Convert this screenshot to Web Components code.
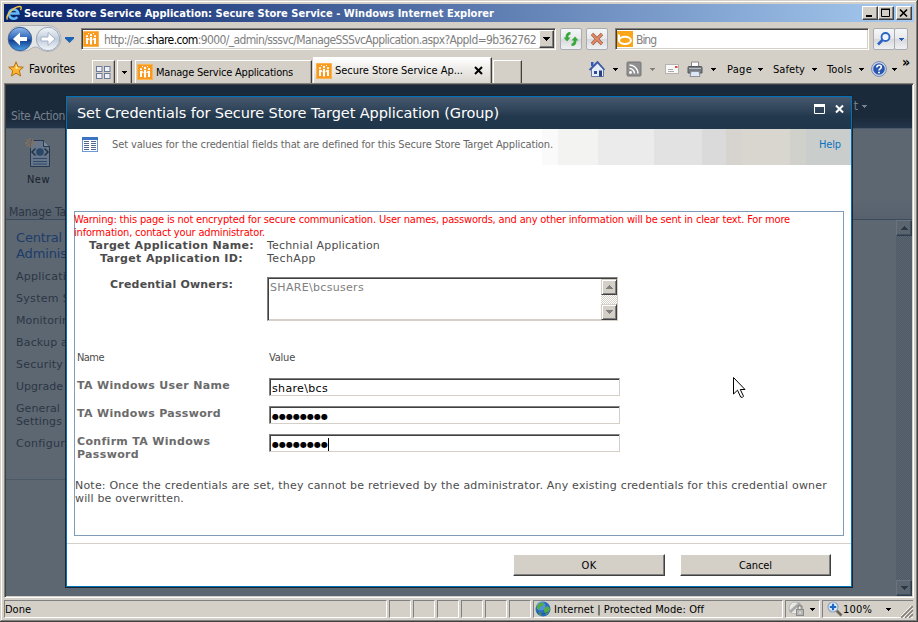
<!DOCTYPE html>
<html lang="en"><head><meta charset="utf-8"><title>Secure Store Service</title>
<style>
html,body{margin:0;height:100%;overflow:hidden;background:#d4d0c8}
body{--v:"DejaVu Sans",Verdana,sans-serif;--t:"DejaVu Sans Condensed","DejaVu Sans",Tahoma,sans-serif;font:11px/13px var(--t);color:#000}
</style></head><body>
<ie-window></ie-window>
<script>
const define=(name,css,html,setup)=>customElements.define(name,class extends HTMLElement{
  constructor(){super();this.attachShadow({mode:'open'});}
  connectedCallback(){
    if(this.ready)return;this.ready=true;
    this.shadowRoot.innerHTML=`<style>*{box-sizing:border-box}:host{display:block;box-sizing:border-box}svg{display:block;flex:none}${css}</style>${typeof html==='function'?html(this):html}`;
    if(setup)setup(this);
  }
});
const people=`<rect width="16" height="16" rx="1.5" fill="#f99a1f"/><rect x=".5" y=".5" width="15" height="15" rx="1" fill="none" stroke="#fbb450"/><g fill="#fff"><circle cx="4" cy="5.200" r="1.100"/><circle cx="12" cy="5.200" r="1.100"/><circle cx="8" cy="4" r="1.200"/><path d="M3 7h2v6H3zM11 7h2v6h-2zM7 6h2v7.500H7zM5 7l1.500 1v1.500L5 8.500zM11 7L9.500 8v1.500l1.500-1z"/><path d="M5 2h1v1H5zM10 2h1v1h-1z"/></g>`;
const icons={
 ie:[16,16,`<g fill="none" stroke="#63b8f5" stroke-width="2.600"><path d="M4 8.500H12.300A4.700 4.700 0 1 0 11.300 12"/></g><path d="M1.500 14.500C-1 11 7 2.500 13 1.500c3-.5 2.500 2 1.500 3.500" fill="none" stroke="#f6c246" stroke-width="1.400"/>`],
 people:[16,16,people],
 refresh:[16,16,`<path d="M7.500 1v2.500q-2.200 0-2.200 3H7.500L4 10.500.5 6.500h2Q2.500 1 7.500 1z" fill="#35a93c"/><path d="M8.500 15v-2.500q2.200 0 2.200-3H8.500L12 5.500l3.500 4h-2Q13.500 15 8.500 15z" fill="#35a93c"/>`],
 stop:[16,16,`<path d="M3 3l10 10M13 3L3 13" stroke="#9c5a45" stroke-width="3.200"/><path d="M3 3l10 10M13 3L3 13" stroke="#e58a66" stroke-width="1.800"/>`],
 bing:[16,16,`<rect width="16" height="16" fill="#faa61a"/><path d="M1 3l2 1v6H1z" fill="#fff"/><ellipse cx="8" cy="9.300" rx="5.900" ry="3.600" fill="none" stroke="#fff" stroke-width="2"/>`],
 search:[16,16,`<circle cx="9.500" cy="6" r="4" fill="#eaf3ff" stroke="#2a62c6" stroke-width="1.800"/><path d="M6.500 9L2 13.500" stroke="#2a62c6" stroke-width="2.600"/>`],
 star:[16,16,`<path d="M8 .8l2 5 5.300.4-4 3.500 1.300 5.300L8 12.200 3.500 15l1.200-5.300L.7 6.200 6 5.800z" fill="#fdb62c" stroke="#b87018"/><path d="M8 3l1.200 3.500 3.300.4-5 1z" fill="#fff0ad"/>`],
 quick:[16,16,`<g fill="#eef0f6" stroke="#6c7a9a"><rect x="1.500" y="2.500" width="5.500" height="5"/><rect x="9.500" y="2.500" width="5.500" height="5"/><rect x="1.500" y="9.500" width="5.500" height="5"/><rect x="9.500" y="9.500" width="5.500" height="5"/></g>`],
 home:[16,16,`<path d="M2.500 8v7.500h12V8L8.500 2z" fill="#e6edf8" stroke="#6678a8"/><path d="M.5 9L8.500 1l7 8" fill="none" stroke="#3d5aa8" stroke-width="1.800"/><path d="M2 1h2.500v4H2z" fill="#3358c0"/><path d="M5 10h3v3H5z" fill="#2d4e9e"/><path d="M10 9.500h3v6h-3z" fill="#26437f"/>`],
 feed:[16,16,`<rect x="1" y="1" width="14" height="14" rx="1" fill="#8f8f8f" stroke="#777"/><circle cx="4.500" cy="11.500" r="1.400" fill="#fff"/><path d="M3.500 7.500a5 5 0 0 1 5 5M3.500 4a8.500 8.500 0 0 1 8.500 8.500" fill="none" stroke="#fff" stroke-width="1.500"/>`],
 mail:[16,16,`<rect x="1.500" y="3.500" width="13" height="9" fill="#f8f8f6" stroke="#b6b2ad"/><path d="M11 5h2.500v2H11z" fill="#d44f45"/><path d="M4 8.500h5M4 10.500h6" stroke="#aaa"/>`],
 print:[16,16,`<path d="M4.500 1h7v6h-7z" fill="#fff" stroke="#888"/><path d="M1 6.500q0-1 1-1h12q1 0 1 1V12H1z" fill="#777b83" stroke="#55585f"/><path d="M2 7.500h12" stroke="#b9bcc3"/><path d="M4 10.500h8l1 5H3z" fill="#dce7f7" stroke="#8b8f96"/>`],
 help:[16,16,`<circle cx="8" cy="8" r="7.400" fill="#cfdaf0" stroke="#7787ac"/><circle cx="8" cy="8" r="5.800" fill="#2a55ae"/><path d="M5.800 6.500q0-2.300 2.300-2.300t2.200 1.900q0 1.200-1.300 1.800-1 .5-1 1.500" fill="none" stroke="#fff" stroke-width="1.600"/><circle cx="8" cy="11.500" r="1" fill="#fff"/>`],
 list:[16,16,`<rect x=".5" y=".5" width="15" height="14" fill="#fff" stroke="#6d9ad4"/><path d="M0 0h16v3H0z" fill="#3c74c4"/><path d="M2 4.500h5M2 6.500h5M2 8.500h5M2 10.500h5M2 12.500h5M9 4.500h5M9 6.500h5M9 8.500h5M9 10.500h5M9 12.500h5" stroke="#56698a"/>`],
 newpage:[26,31,`<path d="M5.500 2.500h13l6 6v20h-19z" fill="#677688" stroke="#26384f"/><path d="M18.500 2.500v6h6" fill="#7b8998" stroke="#26384f"/><circle cx="15" cy="14" r="3.800" fill="#294769"/><path d="M10.500 10.500L7 14l3.500 3.500M19.500 10.500L23 14l-3.500 3.500" fill="none" stroke="#20334a" stroke-width="1.500"/><path d="M8 20.500h14M8 23.500h14M8 26h14" stroke="#2d466a"/><path d="M5 0v10M0 5h10M1.500 1.500l7 7M8.500 1.500l-7 7" stroke="#85705a" stroke-width="1.400"/><circle cx="5" cy="5" r="1.800" fill="#5f6872"/>`],
 globe:[16,16,`<circle cx="8" cy="8" r="7.500" fill="#2c6bc0"/><circle cx="6" cy="5" r="4.500" fill="#6eaee8" opacity=".6"/><path d="M3 3q3-2 6-1l-1 3-3 1-1 3-2-1q-1-3 1-5zM9 7l4-2 2 3-2 4-2 2-2-4zM4 11l3 1-1 3q-2-1-3-3z" fill="#55ab45"/><path d="M2 11q5 4 11 0" fill="none" stroke="#143f82" opacity=".6"/>`],
 lock:[18,16,`<circle cx="7" cy="7" r="6" fill="#e8e8e6" stroke="#b5b5b3"/><path d="M2 11L12 2" stroke="#aaa" stroke-width="3"/><rect x="8.500" y="8.500" width="7" height="6" fill="#b7b7b5" stroke="#8a8a88"/><path d="M10 8V6.500q0-2 2-2t2 2V8" fill="none" stroke="#8a8a88" stroke-width="1.300"/><path d="M12 10.500v2" stroke="#fff"/>`],
 zoom:[16,16,`<path d="M9 9l5.500 5.500" stroke="#6d6458" stroke-width="2.600"/><circle cx="6" cy="6" r="5" fill="#dcebfb" stroke="#93a4bb" stroke-width="1.200"/><path d="M6 2.800v6.400M2.800 6h6.400" stroke="#1f67c4" stroke-width="2.200"/>`],
 cursor:[13,22,`<path d="M.5.5v16.500l4-3.800 3.200 6.900q2 1 2.800-.9l-3.200-6.700h4.700z" fill="#fff" stroke="#000"/>`],
 nav:[58,30,`<defs><linearGradient id="b" x2="0" y2="1"><stop stop-color="#8fb7ea"/><stop offset=".5" stop-color="#2a62b8"/><stop offset=".55" stop-color="#123f90"/><stop offset="1" stop-color="#4ba2e6"/></linearGradient><linearGradient id="f" x2="0" y2="1"><stop stop-color="#f5f8fb"/><stop offset=".5" stop-color="#c0ccdb"/><stop offset="1" stop-color="#f4f7fa"/></linearGradient></defs><path d="M15 1.500h27a13 13 0 0 1 0 26q-6 0-10-4-2-1-5 0-4 4-12 4a13 13 0 0 1 0-26z" fill="#e4e5e5" stroke="#aeb2b8"/><circle cx="14" cy="15" r="11.700" fill="url(#b)" stroke="#3c5f96"/><circle cx="42" cy="15" r="11.700" fill="url(#f)" stroke="#9aa8b9"/><path d="M7 15l7-6.500v4.500h7v4h-7v4.500z" fill="#fff"/><path d="M49 15l-7-6.500v4.500h-7v4h7v4.500z" fill="#fff" stroke="#a4b2c5"/>`],
 grip:[12,12,`<path d="M0 12L12 0M4 12l8-8M8 12l4-4" stroke="#858178" stroke-width="1.600"/><path d="M-1 11L11-1M3 11l9-9M7 11l5-5" stroke="#fff" stroke-width=".8"/>`]
};
define('ui-icon',':host{flex:none}',el=>{const [w,h,b]=icons[el.getAttribute('name')];
  return `<svg width="${w}" height="${h}" viewBox="0 0 ${w} ${h}">${b}</svg>`;});
define('drop-arrow',`:host{flex:none}:host([up]){transform:scaleY(-1)}`,el=>el.hasAttribute('big')?
 `<svg width="9" height="6"><path d="M0 0h9v1.500L4.500 6 0 1.500z" fill="currentColor"/></svg>`:el.hasAttribute('mid')?
 `<svg width="7" height="4" shape-rendering="crispEdges"><path d="M0 0h7v1H6v1H5v1H4v1H3V3H2V2H1V1H0z" fill="currentColor"/></svg>`:
 `<svg width="5" height="3" shape-rendering="crispEdges"><path d="M0 0h5v1H4v1H3v1H2V2H1V1H0z" fill="currentColor"/></svg>`);
define('win-button',`:host{width:16px;height:14px;background:#d4d0c8;border:1px solid;border-color:#fff #404040 #404040 #fff;box-shadow:inset -1px -1px #808080;flex:none}`,
 el=>`<svg width="13" height="12" viewBox="0 0 13 12">${{min:'<path d="M3 8h6v2H3z"/>',max:'<path d="M2.500 2.500h8v7h-8z" fill="none" stroke="#000"/><path d="M2 1.500h9v1.500H2z"/>',close:'<path d="M3 2.500l7 7M10 2.500l-7 7" stroke="#000" stroke-width="1.700"/>'}[el.getAttribute('kind')]}</svg>`);
define('title-bar',`:host{display:flex;height:18px;align-items:center;background:linear-gradient(90deg,#0a246a,#a6caf0);padding:0 2px;color:#fff;font-weight:bold}ui-icon{margin-right:2px}.g{flex:1}win-button:last-child{margin-left:2px}`,
 `<ui-icon name="ie"></ui-icon><fit-text w="470">Secure Store Service Application: Secure Store Service - Windows Internet Explorer</fit-text><span class="g"></span><win-button kind="min"></win-button><win-button kind="max"></win-button><win-button kind="close"></win-button>`);
define('sunken-box',`:host{background:#fff;border:1px solid;border-color:#808080 #fff #fff #808080;box-shadow:inset 1px 1px #404040,inset -1px -1px #d4d0c8;display:flex;align-items:center}`,`<slot></slot>`);
define('soft-button',`:host{display:flex;align-items:center;justify-content:center;height:22px;width:22px;border:1px solid #a9adb3;border-radius:2px;background:linear-gradient(#f5f6f7,#e8e9eb 48%,#d8d9dc 52%,#eef0f2);flex:none}`,`<slot></slot>`);
define('address-row',`:host{display:flex;height:32px;padding:6px 6px 0 2px;align-items:flex-start;font-size:12px}
 .nav{margin-top:-4px}.d{color:#1c63b4;margin:9px 7px 0 1px}.addr{width:475px;height:22px;padding:0 1px 0 1px}.addr fit-text{margin:2px 0 0 5px;color:#808080}b{font-weight:normal;color:#000}.dd{width:15px;height:18px;background:#d4d0c8;border:1px solid;border-color:#fff #404040 #404040 #fff;box-shadow:inset -1px -1px #808080;margin-left:auto;display:flex;align-items:center;justify-content:center}
 .r{margin-left:4px}.s{margin-left:4px}.bing{width:254px;height:22px;margin-left:7px;padding-left:1px;color:#808080}.bing fit-text{margin:2px 0 0 3px}.q{margin-left:4px}.q2{width:14px;margin-left:-1px;color:#245cb8}`,
 `<ui-icon class="nav" name="nav"></ui-icon><drop-arrow big class="d"></drop-arrow><sunken-box class="addr"><ui-icon name="people"></ui-icon><fit-text w="432">http://ac.<b>share.com</b>:9000/_admin/sssvc/ManageSSSvcApplication.aspx?AppId=9b362762</fit-text><span class="dd"><drop-arrow mid></drop-arrow></span></sunken-box><soft-button class="r"><ui-icon name="refresh"></ui-icon></soft-button><soft-button class="s"><ui-icon name="stop"></ui-icon></soft-button><sunken-box class="bing"><ui-icon name="bing"></ui-icon><fit-text w="20">Bing</fit-text></sunken-box><soft-button class="q"><ui-icon name="search"></ui-icon></soft-button><soft-button class="q2"><drop-arrow></drop-arrow></soft-button>`);
define('tab-item',`:host{display:flex;height:23px;align-items:center;border-top:1px solid #fff;border-left:1px solid #fff;border-right:1px solid #404040;box-shadow:inset -1px 0 #aaa69e;gap:3px;padding:0 3px 0 1px;align-self:flex-end;flex:none}:host([active]){height:26px;background:linear-gradient(#fff,#eceae6 50%,#dad7d0)}`,`<slot></slot>`);
define('command-bar',`:host{display:flex;height:29px;align-items:center;padding-left:4px}
 .f{margin:2px 0 0 5px}.qt{margin-left:17px;width:23px;padding-left:2px}.qd{margin-left:2px;width:15px;padding:0 0 0 4px}.a{margin-left:3px;width:177px}.b{margin-left:1px;width:179px;padding-left:2px}.c{margin-left:1px;width:29px}svg{margin-left:auto;margin-right:5px}
 .tools{display:grid;grid-template-columns:24px 13px 24px 14px 23px 24px 16px 31px 15px 39px 15px 32px 12px 21px 10px 10px;align-items:center;margin-left:67px;height:100%;white-space:nowrap}.tools fit-text{margin-top:2px}.tools drop-arrow{margin-top:1px}.more{font-size:14px;font-weight:bold;margin-top:-12px}`,
 `<ui-icon name="star"></ui-icon><fit-text class="f" style="font-size:11.500px" w="46">Favorites</fit-text><tab-item class="qt"><ui-icon name="quick"></ui-icon></tab-item><tab-item class="qd"><drop-arrow></drop-arrow></tab-item><tab-item class="a"><ui-icon name="people"></ui-icon><fit-text w="137">Manage Service Applications</fit-text></tab-item><tab-item class="b" active><ui-icon name="people"></ui-icon><fit-text w="128">Secure Store Service Ap...</fit-text><svg width="9" height="9"><path d="M1 1l7 7M8 1L1 8" stroke="#000" stroke-width="2"/></svg></tab-item><tab-item class="c"></tab-item>
 <div class="tools"><ui-icon name="home"></ui-icon><drop-arrow></drop-arrow><ui-icon name="feed"></ui-icon><drop-arrow style="color:#808080"></drop-arrow><ui-icon name="mail"></ui-icon><ui-icon name="print"></ui-icon><drop-arrow></drop-arrow><fit-text w="25">Page</fit-text><drop-arrow></drop-arrow><fit-text w="32">Safety</fit-text><drop-arrow></drop-arrow><fit-text w="25">Tools</fit-text><drop-arrow></drop-arrow><ui-icon name="help"></ui-icon><drop-arrow></drop-arrow><span class="more">»</span></div>`);
define('site-page',`:host{position:relative;height:511px;background:#5d6772;overflow:hidden;font-family:var(--v);color:#2b3644}
 header{height:44px;background:linear-gradient(#1b2a3b 75%,#23354a);color:#76818c;display:flex;justify-content:space-between;padding:25px 43px 0 5px;font-family:var(--t);font-size:12px;border-bottom:1px solid #49596a}header .t{margin:-10px 2px 0 0;display:flex;height:13px;align-items:center;gap:4px}
 .ribbon{height:91px;padding:9px 0 0 18px;border-bottom:1px solid #3b4b5c;background:linear-gradient(#5d6772 78%,#56616d)}.n{margin:4px 0 0 3px;color:#17202b;font-family:var(--t)}.m{margin:20px 0 0 -15px;font-family:var(--t);font-size:12px}
 .row{display:flex;height:376px}nav{width:60px;height:260px;border-bottom:1px solid #4b5866;padding:10px 0 0 10px}nav h2{margin:0 0 8px;font:13px/16px var(--v);color:#1c3c69}nav fit-text{margin-bottom:9px}nav h2 fit-text{margin:0}nav .tight{margin-bottom:0}
 .scroll{margin-left:auto;width:16px;height:376px;background:conic-gradient(#4d5966 25%,#5a6570 0 50%,#4d5966 0 75%,#5a6570 0) 0 0/2px 2px;display:flex;flex-direction:column;justify-content:space-between}.scroll span{height:16px;display:flex;align-items:center;justify-content:center;background:#5a6570;border:1px solid;border-color:#6a747f #2e3c4b #2e3c4b #6a747f;box-shadow:inset -1px -1px #414e5c;color:#2b3744}`,
 `<header><fit-text w="54">Site Action</fit-text><span class="t">t <drop-arrow></drop-arrow></span></header><div class="ribbon"><ui-icon name="newpage" style="margin-left:1px"></ui-icon><fit-text class="n" w="23">New</fit-text><fit-text class="m" w="57">Manage Ta</fit-text></div><div class="row"><nav><h2><fit-text w="46">Central</fit-text><fit-text w="51">Adminis</fit-text></h2><fit-text w="50">Applicati</fit-text><fit-text w="54">System S</fit-text><fit-text w="53">Monitorin</fit-text><fit-text w="52">Backup a</fit-text><fit-text w="47">Security</fit-text><fit-text w="47">Upgrade</fit-text><fit-text class="tight" w="44">General</fit-text><fit-text w="46">Settings</fit-text><fit-text w="49">Configur</fit-text></nav><div class="scroll"><span><drop-arrow mid up></drop-arrow></span><span><drop-arrow mid></drop-arrow></span></div></div>`);
define('push-button',`:host{width:152px;height:22px;background:#d4d0c8;border:1px solid;border-color:#fff #404040 #404040 #fff;box-shadow:inset -1px -1px #808080;display:flex;align-items:center;justify-content:center;font-family:var(--t)}`,`<slot></slot>`);
define('field-row',`:host{display:flex;height:28px;padding-left:2px;color:#6b6b6b}.l{width:192px;font-weight:bold;padding-top:1px}sunken-box{width:351px;height:18px;color:#000;padding:3px 0 0 2px;border-color:#808080 #d4d0c8 #d4d0c8 #808080;box-shadow:inset 1px 1px #404040;font-family:var(--v)}`,`<div class="l"><slot name="label"></slot></div><sunken-box><slot></slot></sunken-box>`);
define('credential-dialog',`:host{position:absolute;left:66px;top:96px;width:786px;height:491px;border:1px solid #0072bc;background:#fff;box-shadow:0 0 0 1px #1b2532;color:#4c4c4c;font-family:var(--v);white-space:nowrap}
 header{display:flex;height:32px;background:linear-gradient(#45586d,#2e4257 45%,#22384d 60%,#20364b);align-items:center;color:#fff;font-size:14.500px;padding-left:10px}header svg{margin-left:auto;margin-right:6px;margin-top:-8px}
 .desc{height:36px;display:flex;padding:8px 10px 0 15px;background:linear-gradient(90deg,#fafafa 0 16px,#f3f3f2 16px 56px,#ebebeb 56px 112px,#e2e2e2 112px 160px,#dadada 160px 184px,#d7d4cf 184px 200px,#d9d5cf 200px 248px,#d1d1cc 248px 264px,#c9cecd 264px) right/309px 100% no-repeat;font-family:var(--t);color:#666}.desc .tx{margin-left:14px;margin-top:1px}.desc .h{margin-left:auto;margin-top:1px;color:#0c72bd}
 .frame{width:770px;height:325px;margin:46px 0 0 7px;border:1px solid #7f9db9}.warn{color:red;font-family:var(--t);height:27px;padding-top:1px;margin-left:-1px}
 .pair{display:flex;height:13px;align-items:center}.pair fit-text:first-child{font-weight:bold}
 .own{display:flex;height:91px;padding-top:13px}.own .k{font-weight:bold;margin-left:35px}.area{width:351px;height:44px;margin:-1px 0 0 34px;align-items:flex-start;padding:3px 0 0 2px;color:#808080;border-right-color:#d4d0c8;border-bottom-color:#d4d0c8}.bar{width:16px;height:41px;margin-left:auto;margin-top:-2px;background:conic-gradient(#d4d0c8 25%,#fff 0 50%,#d4d0c8 0 75%,#fff 0) 0 0/2px 2px;display:flex;flex-direction:column;justify-content:space-between}.bar span{height:16px;display:flex;align-items:center;justify-content:center;background:#d4d0c8;border:1px solid;border-color:#d4d0c8 #404040 #404040 #d4d0c8;box-shadow:inset 1px 1px #fff,inset -1px -1px #808080;color:#808080}
 .head{display:flex;font-family:var(--t);padding-left:2px;height:27px;margin-top:-5px}.head fit-text+fit-text{margin-left:165px}.dots{font-size:8px}.caret{width:1px;height:13px;background:#000}.note{margin-top:17px}
 footer{height:42px;border-top:1px solid #d4d0c8;margin-top:7px;display:flex;justify-content:flex-end;gap:15px;padding:10px 20px 0 0;color:#000}footer push-button+push-button{width:151px}`,
 `<header><fit-text w="422">Set Credentials for Secure Store Target Application (Group)</fit-text><svg width="31" height="12"><path d="M.5 1.500h10v9H.5z" fill="none" stroke="#fff"/><path d="M0 1h11v3H0z" fill="#fff"/><path d="M22 2.500l7 7M29 2.500l-7 7" stroke="#fff" stroke-width="2"/></svg></header>
 <div class="desc"><ui-icon name="list"></ui-icon><fit-text class="tx" w="441">Set values for the credential fields that are defined for this Secure Store Target Application.</fit-text><fit-text class="h" w="22">Help</fit-text></div>
 <div class="frame"><div class="warn"><fit-text w="716">Warning: this page is not encrypted for secure communication. User names, passwords, and any other information will be sent in clear text. For more</fit-text><fit-text w="191">information, contact your administrator.</fit-text></div>
 <div class="pair"><fit-text w="165" style="margin-left:14px">Target Application Name:</fit-text><fit-text w="113" style="margin-left:13px">Technial Application</fit-text></div><div class="pair"><fit-text w="143" style="margin-left:25px">Target Application ID:</fit-text><fit-text w="49" style="margin-left:24px">TechApp</fit-text></div>
 <div class="own"><fit-text class="k" w="123">Credential Owners:</fit-text><sunken-box class="area"><fit-text w="94">SHARE&#92;bcsusers</fit-text><span class="bar"><span><drop-arrow mid up></drop-arrow></span><span><drop-arrow mid></drop-arrow></span></span></sunken-box></div>
 <div class="head"><fit-text w="27">Name</fit-text><fit-text w="26">Value</fit-text></div>
 <field-row><fit-text slot="label" w="153">TA Windows User Name</fit-text><fit-text w="56">share&#92;bcs</fit-text></field-row>
 <field-row><fit-text slot="label" w="144">TA Windows Password</fit-text><fit-text class="dots" w="56">●●●●●●●●</fit-text></field-row>
 <field-row><div slot="label"><fit-text w="133">Confirm TA Windows</fit-text><fit-text w="62">Password</fit-text></div><fit-text class="dots" w="56">●●●●●●●●</fit-text><span class="caret"></span></field-row>
 <div class="note"><fit-text w="752">Note: Once the credentials are set, they cannot be retrieved by the administrator. Any existing credentials for this credential owner</fit-text><fit-text w="109">will be overwritten.</fit-text></div></div>
 <footer><push-button><fit-text w="15">OK</fit-text></push-button><push-button><fit-text w="33">Cancel</fit-text></push-button></footer>`);
define('status-bar',`:host{display:flex;height:22px;padding-top:2px}div{height:18px;border:1px solid;border-color:#808080 #fff #fff #808080;display:flex;align-items:center;margin-right:2px;flex:none}.s{width:22px}`,
 `<div style="width:383px"><fit-text w="26">Done</fit-text></div><div class="s"></div><div class="s"></div><div class="s"></div><div class="s"></div><div class="s"></div><div class="s"></div><div style="width:250px;padding-left:1px"><ui-icon name="globe"></ui-icon><fit-text w="150" style="margin-left:3px">Internet | Protected Mode: Off</fit-text></div><div style="width:35px;padding-left:2px"><ui-icon name="lock"></ui-icon><drop-arrow style="margin-left:4px"></drop-arrow></div><div style="width:91px;padding-left:4px;border-right:0"><ui-icon name="zoom"></ui-icon><fit-text w="29" style="margin-left:0">100%</fit-text><drop-arrow style="margin-left:14px"></drop-arrow><ui-icon name="grip" style="margin:5px 0 0 10px"></ui-icon></div>`);
define('ie-window',`:host{position:relative;width:918px;height:622px;overflow:hidden;background:#d4d0c8;padding:4px;box-shadow:inset -1px -1px #404040,inset 1px 1px #d4d0c8,inset -2px -2px #808080,inset 2px 2px #fff}
 .view{border:1px solid;border-color:#808080 #fff #fff #808080;padding:1px;box-shadow:inset 1px 1px #404040;width:910px}.cur{position:absolute;left:733px;top:377px}`,
 `<title-bar></title-bar><address-row></address-row><command-bar></command-bar><div class="view"><site-page></site-page></div><status-bar></status-bar><credential-dialog></credential-dialog><ui-icon class="cur" name="cursor"></ui-icon>`);
/* Spreads a single line of text over the width given in its w attribute. */
define('fit-text',':host{width:max-content;flex:none;white-space:nowrap}span{display:inline-block}','<span><slot></slot></span>',el=>{
  const span=el.shadowRoot.querySelector('span'),n=el.textContent.length;
  const w=+el.getAttribute('w');
  span.style.letterSpacing=(w-span.getBoundingClientRect().width)/n+'px';
  el.style.width=w+'px';
});
</script></body></html>
